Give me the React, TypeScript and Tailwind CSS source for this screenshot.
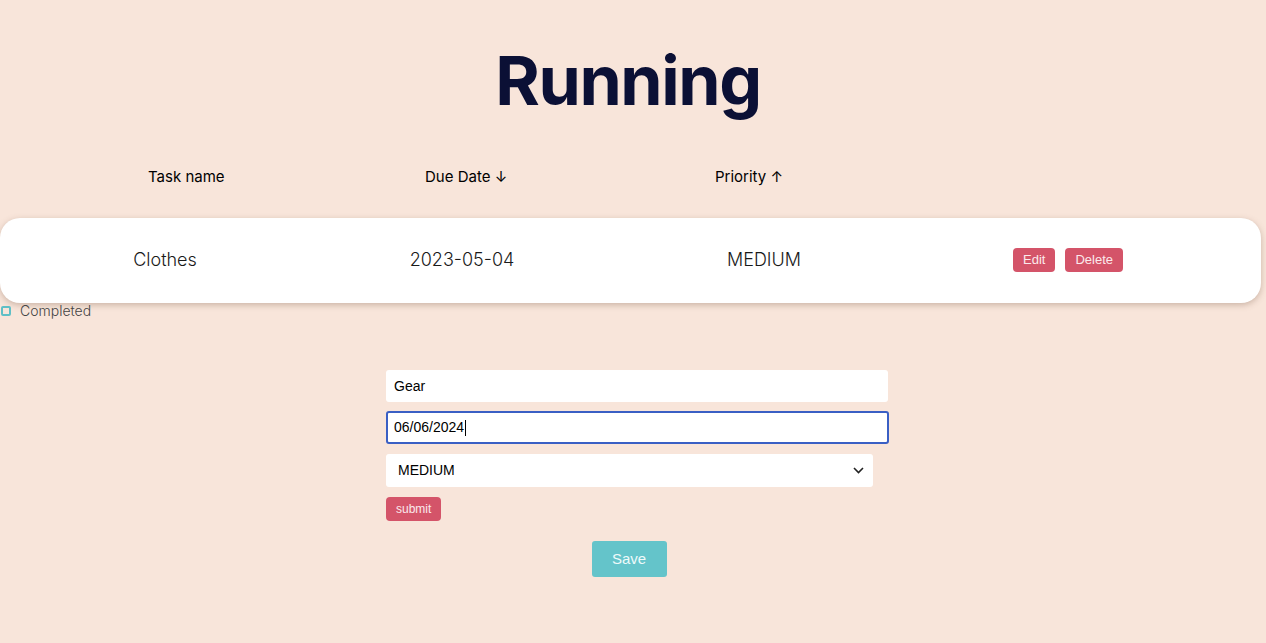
import React from "react";

export default function App() {
  return (
    <div className="min-h-[643px] w-full bg-[#f8e5da] overflow-hidden" style={{ fontFamily: "Inter, 'Liberation Sans', sans-serif" }}>
      <h1 className="pt-[39px] text-center text-[68px] font-bold leading-[82px] tracking-[-1.4px] text-[#0b1035]">
        <span className="pr-[10px]">Running</span>
      </h1>

      <div className="mt-[43px] flex h-[26px] items-center text-[15px] text-black">
        <div className="w-[148px]" />
        <div className="w-[277px]">Task name</div>
        <div className="w-[290px]">Due Date ↓</div>
        <div>Priority ↑</div>
      </div>

      <div className="mt-[28px] flex h-[85px] w-[1261px] items-center rounded-[20px] bg-white pb-[2px] text-[18px] font-light text-[#1a1a1a] shadow-[0_2px_6px_rgba(120,90,70,0.35)]">
        <div className="w-[330px] text-center">Clothes</div>
        <div className="w-[264px] text-center">2023-05-04</div>
        <div className="w-[340px] text-center">MEDIUM</div>
        <div className="flex gap-[10px] pl-[79px]" style={{ fontFamily: "'Liberation Sans', Arial, sans-serif" }}>
          <button className="h-[24px] rounded-[4px] bg-[#d45469] px-[10px] text-[13px] font-normal text-[#fbe9ec]">Edit</button>
          <button className="h-[24px] rounded-[4px] bg-[#d45469] px-[10px] text-[13px] font-normal text-[#fbe9ec]">Delete</button>
        </div>
      </div>

      <div className="flex h-[16px] items-center gap-[9px] pl-[1px] text-[14px] leading-[16px] font-light text-[#444]">
        <span className="inline-block h-[10px] w-[10px] rounded-[2px] border-2 border-[#5fbfc6]" />
        <span>Completed</span>
      </div>

      <div className="mt-[51px] flex flex-col pl-[386px]" style={{ fontFamily: "'Liberation Sans', Arial, sans-serif" }}>
        <div className="flex h-[32px] w-[502px] items-center rounded-[3px] bg-white pl-[8px] text-[14px] text-black">Gear</div>
        <div className="mt-[9px] flex h-[33px] w-[503px] items-center rounded-[3px] border-2 border-[#3a5fc4] bg-white pl-[6px] text-[14px] text-black">
          06/06/2024<span className="ml-[1px] inline-block h-[16px] w-[1px] bg-black" />
        </div>
        <div className="mt-[10px] flex h-[33px] w-[487px] items-center justify-between rounded-[3px] bg-white pl-[12px] pr-[9px] text-[14px] text-black">
          <span>MEDIUM</span>
          <svg width="11" height="7" viewBox="0 0 11 7" fill="none"><path d="M1 1l4.5 4.5L10 1" stroke="#222" strokeWidth="1.6" /></svg>
        </div>
        <div className="mt-[9px]">
          <button className="h-[24px] rounded-[4px] bg-[#d45469] px-[10px] text-[12px] text-[#fbe9ec]">submit</button>
        </div>
      </div>

      <div className="mt-[20px] flex justify-center pr-[8px]">
        <button className="h-[36px] w-[75px] rounded-[3px] bg-[#64c4ca] text-[15px] text-[#eefafa]" style={{ fontFamily: "'Liberation Sans', Arial, sans-serif" }}>Save</button>
      </div>
    </div>
  );
}
